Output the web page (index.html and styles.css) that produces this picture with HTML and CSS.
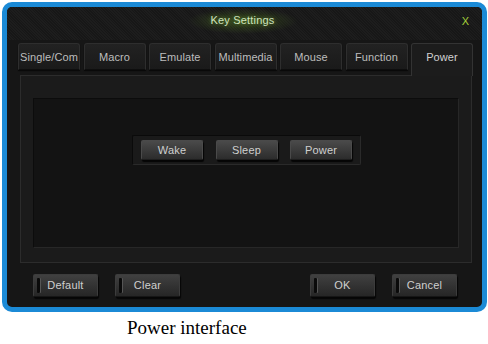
FILE: index.html
```html
<!DOCTYPE html>
<html>
<head>
<meta charset="utf-8">
<link rel="stylesheet" href="styles.css">
</head>
<body>
<div class="dialog">
  <div class="titlebar">
    <span class="title">Key Settings</span>
    <span class="close">X</span>
  </div>
  <div class="tabs">
    <div class="tab">Single/Com</div>
    <div class="tab">Macro</div>
    <div class="tab">Emulate</div>
    <div class="tab">Multimedia</div>
    <div class="tab">Mouse</div>
    <div class="tab">Function</div>
    <div class="tab active">Power</div>
  </div>
  <div class="panel">
    <div class="inner">
      <div class="group">
        <div class="btn">Wake</div>
        <div class="btn">Sleep</div>
        <div class="btn">Power</div>
      </div>
    </div>
  </div>
  <div class="footer">
    <div class="fbtn">Default</div>
    <div class="fbtn">Clear</div>
    <div class="spacer"></div>
    <div class="fbtn">OK</div>
    <div class="fbtn">Cancel</div>
  </div>
</div>
<div class="caption">Power interface</div>
</body>
</html>
```
FILE: styles.css
```css
html, body {
  margin: 0;
  padding: 0;
  background: #ffffff;
}
body {
  width: 488px;
  height: 344px;
  overflow: hidden;
  font-family: "Liberation Sans", Arial, sans-serif;
}
.dialog {
  box-sizing: border-box;
  margin: 2px 0 0 2px;
  width: 485px;
  height: 310px;
  border: 5px solid #1b8ad6;
  border-radius: 10px;
  background: #161616;
  display: flex;
  flex-direction: column;
  overflow: hidden;
}
.titlebar {
  position: relative;
  height: 33px;
  flex: none;
  display: flex;
  justify-content: center;
  background:
    radial-gradient(ellipse 55px 13px at 236px 14px, rgba(100,150,40,0.4), rgba(100,150,40,0) 100%),
    repeating-linear-gradient(45deg, #1d1d1d 0 1px, #171717 1px 2px);
}
.title {
  line-height: 27px;
  font-size: 11px;
  letter-spacing: 0.2px;
  color: #cfe3bd;
  text-shadow: 0 0 4px rgba(140,200,60,0.5);
  margin-left: -4px;
}
.close {
  position: absolute;
  right: 13px;
  top: 1px;
  line-height: 27px;
  font-size: 11px;
  color: #a4cf3a;
}
.tabs {
  display: flex;
  gap: 3.5px;
  padding-left: 11px;
  margin-top: 3px;
  height: 27px;
  flex: none;
  align-items: flex-start;
  position: relative;
  z-index: 1;
}
.tab {
  box-sizing: border-box;
  width: 62px;
  height: 27px;
  border: 1px solid #2e2e2e;
  border-bottom-color: #0e0e0e;
  border-radius: 3px 3px 0 0;
  background: linear-gradient(#222222, #1a1a1a);
  color: #bdbdbd;
  font-size: 11px;
  letter-spacing: 0.1px;
  line-height: 26px;
  text-align: center;
  white-space: nowrap;
  box-shadow: 0 1px 1px #080808;
}
.tab.active {
  height: 33px;
  background: #1c1c1c;
  border-color: #333333;
  border-bottom: none;
  box-shadow: none;
  color: #d0d0d0;
}
.panel {
  box-sizing: border-box;
  margin: 5px 0 0 13px;
  width: 452px;
  height: 188px;
  border: 1px solid #2c2c2c;
  background: #1b1b1b;
  padding: 22px 0 0 12px;
  flex: none;
}
.inner {
  box-sizing: border-box;
  width: 426px;
  height: 150px;
  border: 1px solid #272727;
  border-top-color: #0c0c0c;
  border-left-color: #0c0c0c;
  background: #131313;
  display: flex;
  justify-content: center;
  align-items: flex-start;
  padding-top: 36px;
}
.group {
  box-sizing: border-box;
  width: 229px;
  height: 30px;
  border: 1px solid #2a2a2a;
  border-top-color: #0a0a0a;
  border-left-color: #0a0a0a;
  background: #1a1a1a;
  border-radius: 2px;
  display: flex;
  gap: 12.5px;
  padding: 4px 0 0 8px;
  margin-left: 1px;
}
.btn {
  box-sizing: border-box;
  width: 62px;
  height: 20px;
  border: 1px solid #4a4a4a;
  border-bottom-color: #1e1e1e;
  border-radius: 2px;
  background: linear-gradient(#4a4a4a, #2c2c2c);
  box-shadow: 1px 2px 1px #050505;
  color: #cfcfcf;
  font-size: 11px;
  letter-spacing: 0.2px;
  line-height: 18px;
  text-align: center;
}
.footer {
  display: flex;
  padding: 11px 0 0 26px;
  gap: 17px;
  flex: none;
}
.spacer {
  width: 96px;
}
.fbtn {
  box-sizing: border-box;
  position: relative;
  width: 65px;
  height: 23px;
  border: 1px solid #3c3c3c;
  border-bottom-color: #161616;
  border-radius: 2px;
  background: linear-gradient(#404040, #262626);
  box-shadow: 1px 2px 1px #060606;
  color: #cfcfcf;
  font-size: 11px;
  letter-spacing: 0.2px;
  line-height: 21px;
  text-align: center;
}
.fbtn::before {
  content: "";
  position: absolute;
  left: 3px;
  top: 3px;
  width: 3px;
  height: 15px;
  background: #0a0a0a;
  border-radius: 1px;
  box-shadow: 1px 0 0 #555;
}
.caption {
  margin-top: 5px;
  padding-left: 127px;
  font-family: "Liberation Serif", "Times New Roman", serif;
  font-size: 19px;
  line-height: 22px;
  color: #000000;
}
```
